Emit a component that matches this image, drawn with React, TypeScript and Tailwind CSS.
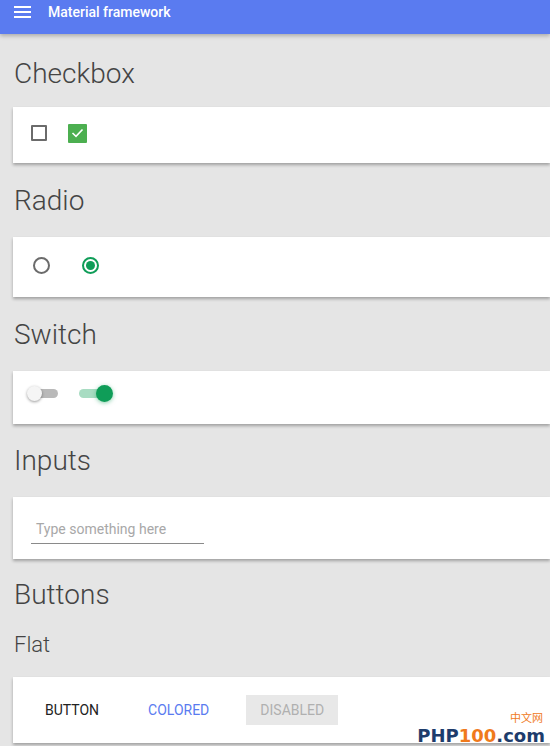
import React from 'react'

function Card({ className = '', children }: { className?: string; children: React.ReactNode }) {
  return (
    <div className={`ml-[13px] bg-white shadow-[0_2px_3px_rgba(0,0,0,0.3)] flex items-center ${className}`}>
      {children}
    </div>
  )
}

function Heading({ children, className = '' }: { children: React.ReactNode; className?: string }) {
  return <h2 className={`pl-[14px] text-[28px] leading-none font-light text-[#444] ${className}`}>{children}</h2>
}

export default function App() {
  return (
    <div
      className="w-[550px] h-[746px] overflow-hidden bg-[#e5e5e5] relative"
      style={{ fontFamily: 'Roboto, "Noto Sans", Arial, sans-serif' }}
    >
      {/* Top bar */}
      <header className="h-[34px] pb-[10px] bg-[#5a7bf0] flex items-center shadow-[0_2px_4px_rgba(0,0,0,0.25)]">
        <div className="ml-[14px] w-[17px] flex flex-col gap-[3px]">
          <span className="h-[2px] bg-white" />
          <span className="h-[2px] bg-white" />
          <span className="h-[2px] bg-white" />
        </div>
        <span className="ml-[17px] text-white text-[14px] font-medium">Material framework</span>
      </header>

      {/* Checkbox */}
      <Heading className="mt-[26px]">Checkbox</Heading>
      <Card className="mt-[19px] h-[56px] pb-[4px]">
        <div className="ml-[18px] w-[16px] h-[16px] border-2 border-[#6b6b6b] rounded-[1px]" />
        <div className="ml-[21px] w-[19px] h-[19px] bg-[#4caf50] rounded-[1px] flex items-center justify-center">
          <svg width="13" height="10" viewBox="0 0 13 10" fill="none">
            <path d="M1.5 5 L5 8.3 L11.5 1.5" stroke="white" strokeWidth="1.6" />
          </svg>
        </div>
      </Card>

      {/* Radio */}
      <Heading className="mt-[24px]">Radio</Heading>
      <Card className="mt-[22px] h-[60px] pb-[3px]">
        <div className="ml-[20px] w-[17px] h-[17px] rounded-full border-2 border-[#6b6b6b]" />
        <div className="ml-[32px] w-[17px] h-[17px] rounded-full border-2 border-[#0f9d58] flex items-center justify-center">
          <div className="w-[9px] h-[9px] rounded-full bg-[#0f9d58]" />
        </div>
      </Card>

      {/* Switch */}
      <Heading className="mt-[24px]">Switch</Heading>
      <Card className="mt-[22px] h-[53px] pb-[8px]">
        <div className="ml-[14px] relative w-[31px] h-[16px] flex items-center">
          <div className="absolute left-[10px] right-0 h-[9px] rounded-full bg-[#b9b9b9]" />
          <div className="absolute left-0 w-[15px] h-[15px] rounded-full bg-[#f5f5f5] shadow-[0_1px_3px_rgba(0,0,0,0.4)]" />
        </div>
        <div className="ml-[21px] relative w-[34px] h-[18px] flex items-center">
          <div className="absolute left-0 right-[8px] h-[9px] rounded-full bg-[#a8dcc2]" />
          <div className="absolute right-0 w-[17px] h-[17px] rounded-full bg-[#0f9d58] shadow-[0_1px_4px_rgba(15,157,88,0.5)]" />
        </div>
      </Card>

      {/* Inputs */}
      <Heading className="mt-[23px]">Inputs</Heading>
      <Card className="mt-[22px] h-[62px]">
        <div className="ml-[18px] mt-[4px] w-[173px] border-b border-[#8a8a8a] pb-[2px] pl-[5px]">
          <span className="text-[14px] text-[#a8a8a8]">Type something here</span>
        </div>
      </Card>

      {/* Buttons */}
      <Heading className="mt-[22px]">Buttons</Heading>
      <h3 className="pl-[14px] mt-[25px] text-[22px] leading-none font-light text-[#444]">Flat</h3>
      <Card className="mt-[21px] h-[66px]">
        <button className="ml-[20px] px-[12px] h-[30px] text-[14px] text-[#222] uppercase">Button</button>
        <button className="ml-[25px] px-[12px] h-[30px] text-[14px] text-[#5a7bf0] uppercase">Colored</button>
        <button className="ml-[25px] w-[92px] h-[30px] bg-[#e8e8e8] text-[14px] text-[#b0b0b0] uppercase">Disabled</button>
      </Card>

      {/* Watermark */}
      <div className="absolute right-[5px] bottom-0 flex flex-col items-end">
        <span
          className="text-[11px] leading-[16px] text-[#f07a1c] mr-[2px]"
          style={{ fontFamily: '"Noto Sans CJK SC", sans-serif' }}
        >
          中文网
        </span>
        <span className="text-[18px] leading-[21px] font-bold" style={{ fontFamily: '"DejaVu Sans", sans-serif' }}>
          <span className="text-[#1d3c6c]">PHP</span>
          <span className="text-[#f07a1c]">100</span>
          <span className="text-[#1d3c6c]">.com</span>
        </span>
      </div>
    </div>
  )
}
